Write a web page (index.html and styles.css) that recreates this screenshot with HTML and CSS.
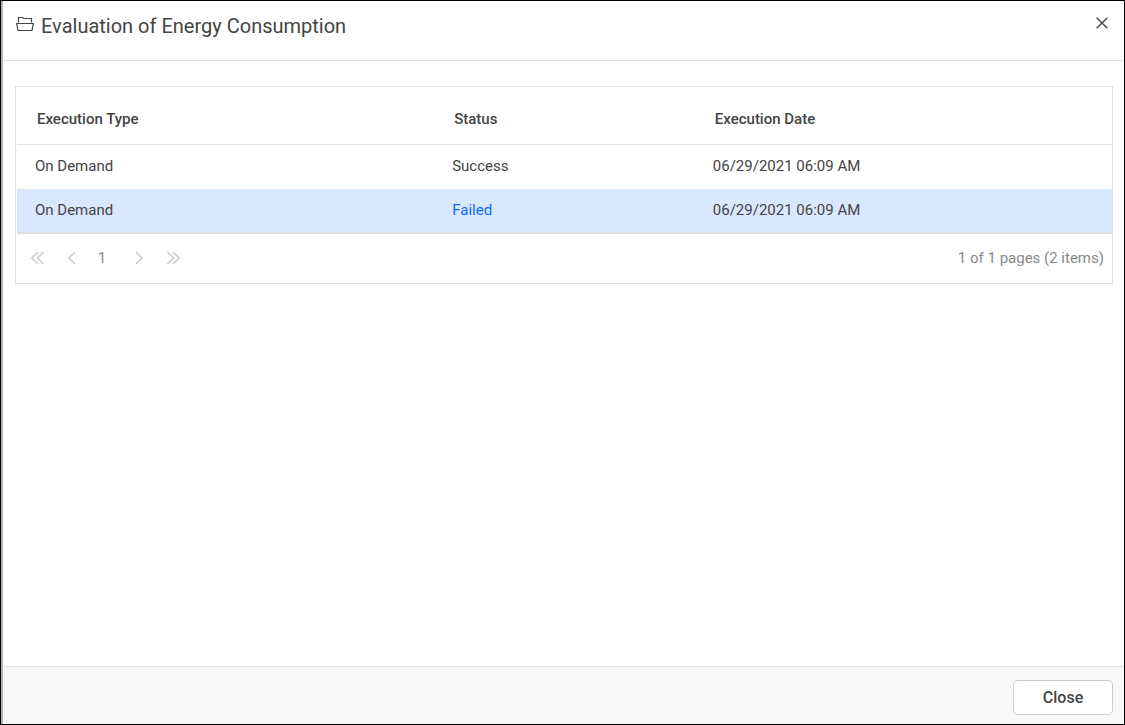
FILE: index.html
```
<!DOCTYPE html>
<html lang="en">
<head>
<meta charset="utf-8">
<meta name="viewport" content="width=device-width, initial-scale=1">
<title>Evaluation of Energy Consumption</title>
<link rel="stylesheet" href="styles.css">
</head>
<body>
<section class="dialog" role="dialog" aria-labelledby="dialog-title">
  <header class="dialog-header">
    <svg class="folder-icon" width="18" height="16" viewBox="0 0 18 16" fill="none" stroke="currentColor" stroke-width="1.2" aria-hidden="true">
      <path d="M2.5 6.5V1.5H6.5L8 2.5H15.5V6.5M0.7 7.5H17.3L16 14.5H2Z"/>
    </svg>
    <h1 class="dialog-title" id="dialog-title">Evaluation of Energy Consumption</h1>
    <button class="icon-button dismiss" type="button" aria-label="Dismiss">
      <svg width="12" height="12" viewBox="0 0 12 12" fill="none" stroke="currentColor" stroke-width="1.4" aria-hidden="true"><path d="M0.7 0.7L11.3 11.3M11.3 0.7L0.7 11.3"/></svg>
    </button>
  </header>
  <main class="dialog-body">
    <div class="grid">
      <table class="grid-table">
        <colgroup><col class="col-type"><col class="col-status"><col class="col-date"></colgroup>
        <thead>
          <tr><th scope="col">Execution Type</th><th scope="col">Status</th><th scope="col">Execution Date</th></tr>
        </thead>
        <tbody>
          <tr><td>On Demand</td><td>Success</td><td>06/29/2021 06:09 AM</td></tr>
          <tr class="selected"><td>On Demand</td><td><a class="status-link" href="#">Failed</a></td><td>06/29/2021 06:09 AM</td></tr>
        </tbody>
      </table>
      <div class="pager">
        <nav class="pager-nav" aria-label="Pages">
          <button class="icon-button" type="button" aria-label="First page"><svg width="14" height="14" viewBox="0 0 14 14" fill="none" stroke="currentColor" stroke-width="1.6" aria-hidden="true"><path d="M7 1L1 7L7 13M12.5 1L6.5 7L12.5 13"/></svg></button>
          <button class="icon-button" type="button" aria-label="Previous page"><svg width="14" height="14" viewBox="0 0 14 14" fill="none" stroke="currentColor" stroke-width="1.6" aria-hidden="true"><path d="M10 1L4 7L10 13"/></svg></button>
          <button class="page-number" type="button" aria-current="page">1</button>
          <button class="icon-button" type="button" aria-label="Next page"><svg width="14" height="14" viewBox="0 0 14 14" fill="none" stroke="currentColor" stroke-width="1.6" aria-hidden="true"><path d="M4 1L10 7L4 13"/></svg></button>
          <button class="icon-button" type="button" aria-label="Last page"><svg width="14" height="14" viewBox="0 0 14 14" fill="none" stroke="currentColor" stroke-width="1.6" aria-hidden="true"><path d="M1.5 1L7.5 7L1.5 13M7 1L13 7L7 13"/></svg></button>
        </nav>
        <span class="pager-info">1 of 1 pages (2 items)</span>
      </div>
    </div>
  </main>
  <footer class="dialog-footer">
    <button class="close-button" type="button">Close</button>
  </footer>
</section>
</body>
</html>
```
FILE: styles.css
```
* {
  box-sizing: border-box;
}

body {
  margin: 0;
  background: #fff;
  color: #444;
  font-family: Roboto, "Liberation Sans", sans-serif;
  font-size: 15px;
  line-height: 20px;
}

button {
  font: inherit;
  color: inherit;
  cursor: pointer;
}

.dialog {
  display: flex;
  flex-direction: column;
  min-height: 100vh;
  border: 1px solid #000;
  box-shadow: inset 2px 0 #b5b2b2;
  padding-left: 2px;
}

.dialog-header {
  display: flex;
  align-items: flex-start;
  height: 60px;
  padding: 12px 12px 0 13px;
  border-bottom: 1px solid #e0e0e0;
}

.folder-icon {
  margin-top: 3px;
  margin-right: 7px;
  flex: none;
}

.dialog-title {
  flex: 1;
  margin: 0;
  font-size: 20px;
  font-weight: 400;
  line-height: 26px;
}

.icon-button {
  display: flex;
  align-items: center;
  justify-content: center;
  width: 20px;
  height: 20px;
  padding: 0;
  border: 0;
  background: none;
}

.dialog-body {
  flex: 1;
  padding: 25px 11px 25px 12px;
}

.grid {
  border: 1px solid #e0e0e0;
  padding-left: 1px;
}

.grid-table {
  width: 100%;
  table-layout: fixed;
  border-collapse: separate;
  border-spacing: 0;
}

.col-type {
  width: 38.1%;
}

.col-status {
  width: 23.8%;
}

th {
  height: 58px;
  padding: 7px 20px 0;
  border-bottom: 1px solid #e0e0e0;
  font-weight: 500;
  text-align: left;
}

td {
  height: 44px;
  padding: 0 18px 2px;
}

.selected td {
  height: 45px;
  padding-bottom: 1px;
  border-bottom: 2px solid #e0e0e0;
  background: #dae8ff;
}

.status-link {
  color: #0a6cff;
  text-decoration: none;
}

.pager {
  display: flex;
  align-items: center;
  justify-content: space-between;
  height: 49px;
  padding: 0 8px 2px 11px;
  color: #888;
}

.pager-nav {
  display: flex;
  align-items: center;
  gap: 14px;
}

.pager-nav .icon-button {
  color: #ccc;
}

.page-number {
  width: 20px;
  margin: 0 3px 0 -4px;
  padding: 0;
  border: 0;
  background: none;
}

.dialog-footer {
  display: flex;
  justify-content: flex-end;
  padding: 13px 11px 9px;
  border-top: 1px solid #e0e0e0;
  background: #f8f8f8;
}

.close-button {
  width: 100px;
  height: 35px;
  padding: 0;
  border: 1px solid #ccc;
  border-radius: 5px;
  background: #fff;
  font-size: 16px;
  font-weight: 500;
}
```
